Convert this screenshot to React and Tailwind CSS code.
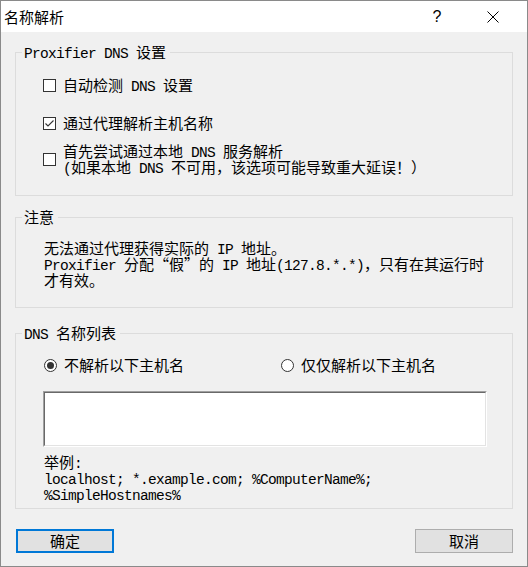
import React from "react";

function Mixed({ text }) {
  const runs = [];
  for (const ch of text) {
    const a = ch.charCodeAt(0) < 128;
    const last = runs[runs.length - 1];
    if (last && last.a === a) last.s += ch;
    else runs.push({ a, s: ch });
  }
  return (
    <>
      {runs.map((r, i) =>
        r.a ? (
          <span key={i} className="font-['Liberation_Mono'] text-[14.5px] tracking-[-0.7px]">
            {r.s}
          </span>
        ) : (
          <span key={i}>{r.s}</span>
        )
      )}
    </>
  );
}

function Line({ text, className = "" }) {
  return (
    <div className={"h-[16px] leading-[16px] whitespace-pre " + className}>
      <Mixed text={text} />
    </div>
  );
}

function Group({ label, className = "", children }) {
  return (
    <div className={"relative border border-[#dcdcdc] " + className}>
      <div className="absolute left-[6px] top-[-9px] bg-[#f0f0f0] pl-[2px] pr-[4px] h-[16px] leading-[16px] whitespace-pre">
        <Mixed text={label} />
      </div>
      {children}
    </div>
  );
}

function Checkbox({ checked }) {
  return (
    <div className="w-[13px] h-[13px] border border-[#333333] bg-white shrink-0 mr-[7px] flex items-center justify-center">
      {checked && (
        <svg width="11" height="11" viewBox="0 0 11 11">
          <path d="M1.5 5.5 L4 8 L9.5 2.5" stroke="#333333" strokeWidth="1.1" fill="none" />
        </svg>
      )}
    </div>
  );
}

function Radio({ checked }) {
  return (
    <div className="w-[13px] h-[13px] rounded-full border border-[#333333] bg-white shrink-0 mr-[7px] flex items-center justify-center">
      {checked && <div className="w-[7px] h-[7px] rounded-full bg-[#333333]" />}
    </div>
  );
}

export default function App() {
  return (
    <div className="w-[528px] h-[567px] border border-[#8a8a8a] flex flex-col bg-[#f0f0f0] text-black font-['Noto_Sans_CJK_SC',sans-serif] text-[15px] leading-[16px]">
      {/* title bar */}
      <div className="h-[31px] bg-white flex items-center pl-[3px] shrink-0">
        <span className="text-[15px] leading-[20px]">名称解析</span>
        <div className="ml-auto flex items-center mr-[19px]">
          <div className="w-[30px] flex justify-center font-['Liberation_Sans'] text-[16px]">?</div>
          <div className="w-[30px] ml-[26px] flex justify-center">
            <svg width="12" height="12" viewBox="0 0 12 12">
              <path d="M0.5 0.5 L11.5 11.5 M11.5 0.5 L0.5 11.5" stroke="#000" strokeWidth="1" />
            </svg>
          </div>
        </div>
      </div>

      {/* body */}
      <div className="flex flex-col px-[14px]">
        <Group label="Proxifier DNS 设置" className="mt-[20px] h-[144px] pt-[24px] pl-[27px]">
          <div className="flex items-center">
            <Checkbox />
            <Line text="自动检测 DNS 设置" />
          </div>
          <div className="flex items-center mt-[22px]">
            <Checkbox checked />
            <Line text="通过代理解析主机名称" />
          </div>
          <div className="flex items-center mt-[12px]">
            <Checkbox />
            <div>
              <Line text="首先尝试通过本地 DNS 服务解析" />
              <Line text="(如果本地 DNS 不可用，该选项可能导致重大延误！）" />
            </div>
          </div>
        </Group>

        <Group label="注意" className="mt-[21px] h-[91px] pt-[22px] pl-[28px]">
          <Line text="无法通过代理获得实际的 IP 地址。" />
          <Line text="Proxifier 分配“假”的 IP 地址(127.8.*.*)，只有在其运行时" />
          <Line text="才有效。" />
        </Group>

        <Group label="DNS 名称列表" className="mt-[25px] h-[176px] pt-[23px]">
          <div className="flex items-center pl-[28px]">
            <div className="w-[237px] flex items-center">
              <Radio checked />
              <Line text="不解析以下主机名" />
            </div>
            <div className="flex items-center">
              <Radio />
              <Line text="仅仅解析以下主机名" />
            </div>
          </div>
          <div className="mt-[18px] ml-[27px] w-[444px] h-[56px] border border-t-[#a0a0a0] border-l-[#a0a0a0] border-b-white border-r-white">
            <div className="w-full h-full bg-white border border-t-[#696969] border-l-[#696969] border-b-[#e3e3e3] border-r-[#e3e3e3]" />
          </div>
          <div className="mt-[7px] pl-[28px]">
            <Line text="举例:" />
            <Line text="localhost; *.example.com; %ComputerName%;" />
            <Line text="%SimpleHostnames%" />
          </div>
        </Group>

        <div className="mt-[20px] flex justify-between">
          <button className="ml-[1px] w-[98px] h-[24px] bg-[#e1e1e1] border-2 border-[#0078d7] flex items-center justify-center leading-[16px]">
            确定
          </button>
          <button className="w-[98px] h-[24px] bg-[#e1e1e1] border border-[#adadad] flex items-center justify-center leading-[16px]">
            取消
          </button>
        </div>
      </div>
    </div>
  );
}
